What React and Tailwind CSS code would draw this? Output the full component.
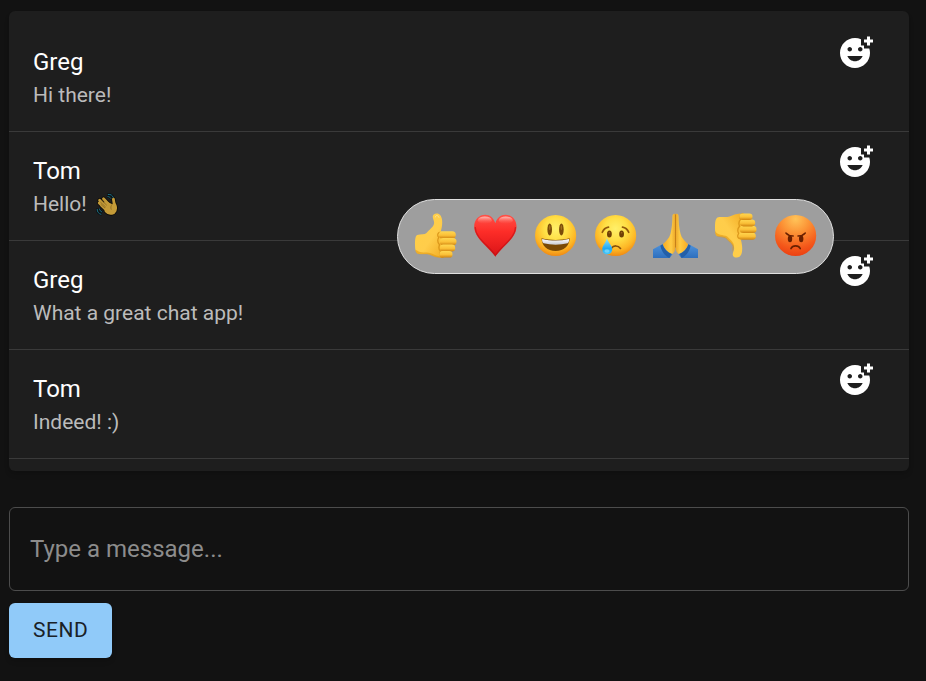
import { MdAddReaction } from "react-icons/md";

const handFingers = "M3.600 7.300l8 8M5.300 12.300l6 5.600M7.500 5.800l6.500 7M3.200 9.900l7 6.500M17.400 6.200c.2 3 1 5.500 1.800 8";
const handPalm = "M9.500 9.500l6.300 3 3.200-.5c1.800 4.500-.2 7.600-3.200 8.300-2.500.6-4.300-.6-5.800-2.300z";
const motionLines = "M12.200 1.400c2.600-.1 4.300.8 5 3M11.900 3.600c1.300.1 2.200.6 2.900 1.700M1.200 16.300c0 2.600 1.300 4.500 3.800 5M3.500 16c.2 1.500 1 2.400 2.300 2.900";

function WavingHand() {
  return (
    <svg viewBox="0 0 24 24" className="ml-1 inline-block size-6 align-middle" role="img" aria-label="Waving hand">
      <g strokeLinecap="round" strokeLinejoin="round">
        <path d={handFingers} fill="none" stroke="#0c0b08" strokeWidth="4.400" />
        <path d={handPalm} fill="#0c0b08" stroke="#0c0b08" strokeWidth="4.400" />
        <path d={motionLines} fill="none" stroke="#0a0d0e" strokeWidth="2.200" />
        <path d={motionLines} fill="none" stroke="#1e7387" strokeWidth="1" />
        <path d={handFingers} fill="none" stroke="#c49b38" strokeWidth="2.800" />
        <path d={handPalm} fill="#c49b38" stroke="#c49b38" strokeWidth="2.800" />
        <path d="M5.800 7.400l4.700 4.600M4.600 9.300l4.800 4.500M5 11.500l3.800 3.400M16 11.500c-1.300 1.600-1.500 3.200-.8 4.800" fill="none" stroke="#80601c" strokeWidth=".7" />
      </g>
    </svg>
  );
}

function ThumbShape() {
  return (
    <>
      <path
        d="M23.700.4c-2.900 0-4.300 1.700-3.900 3.900.4 2.300 1.700 4 1.200 6.500-.7 3.600-4.600 5.600-7.500 9.200-1.800 1.700-5.600 1.200-9.300 1.900C2.200 22.600 1.900 28 2 32.500c.1 3.600.6 7 2.400 8 3.600 1.200 8-.2 12.200 1 3.800 1.500 6.400 2.700 10.400 3l6-3V20l-5.200-1.500c1-3.500 1.800-7.800 1.200-11.900C28.500 2.800 26.700.4 23.700.4z"
        fill="url(#thumbFill)"
      />
      <path d="M29 20c-3.500-1.500-5.500 1.200-3.300 4.500-1.500 2.700-.8 5.500.8 7.300-1 2.600-.6 5 1 6.400-1.200 2.800-.3 5.800 3 6.400" fill="none" stroke="#dc981b" strokeWidth="1.300" />
    </>
  );
}

function Thumb() {
  return (
    <>
      <ThumbShape />
      <path d="M4 37.500c4 3 9 1.500 13 2.500 4 1.200 6 3 10 3.200l3 1.300c-6 .9-9.800-1.300-13.400-2.800-4.200-1.200-8.600.2-12.200-1-1.400-.8-1.800-2-2.100-4z" fill="#e39a14" opacity=".6" />
      <rect x="25.800" y="18.200" width="17" height="7.400" rx="3.500" fill="url(#fingerFill)" />
      <rect x="26.800" y="25" width="16.700" height="7.200" rx="3.500" fill="url(#fingerFill)" />
      <rect x="27" y="31.600" width="15.200" height="6.900" rx="3.300" fill="url(#fingerFill)" />
      <rect x="26.500" y="38" width="13" height="6.600" rx="3.200" fill="url(#fingerFill)" />
      <path d="M22.300 4c0-2 2.800-2.200 3.600.3" fill="none" stroke="#ffe48a" strokeWidth="1" strokeLinecap="round" />
    </>
  );
}

function ThumbsDown() {
  return (
    <>
      <g transform="matrix(1 0 0 -1 0 45)">
        <ThumbShape />
      </g>
      <path d="M2.100 18c2.300 4.500 8 3.700 11.800 5.300 3.500 3.600 6.500 5.500 7.100 9.500.3 2.500-1 4.400-1.200 6.700-.2-2-.8-3.500-.2-5.800-.7-3.800-4.600-5.400-7.200-8.400-2.400-1.300-5.600-.9-8.200-1.900-1.700-.7-2.100-3-2.100-5.400z" fill="#e39a14" opacity=".6" />
      <rect x="25.800" y="19.400" width="17" height="7.400" rx="3.500" fill="url(#fingerFill)" />
      <rect x="26.800" y="12.800" width="16.700" height="7.200" rx="3.500" fill="url(#fingerFill)" />
      <rect x="27" y="6.500" width="15.200" height="6.900" rx="3.300" fill="url(#fingerFill)" />
      <rect x="26.500" y=".4" width="13" height="6.600" rx="3.200" fill="url(#fingerFill)" />
    </>
  );
}

function Heart() {
  return (
    <>
      <path
        d="M22.300 10.300C20.700 4.900 17 1.800 12.300 1.800 6 1.800 1.200 6.700 1.200 13.500c0 11.800 13.800 19.500 21.100 30.200 7.300-10.700 21.200-18.400 21.200-30.200 0-6.800-4.800-11.700-11.100-11.700-4.700 0-8.500 3.100-10.100 8.500z"
        fill="url(#heartFill)"
      />
      <path d="M2.200 14c0 11 13.500 18.500 20.100 28.300C29 32.500 42.500 25 42.500 14" fill="none" stroke="#b80f12" strokeWidth="1.300" opacity=".55" />
      <ellipse cx="11.800" cy="7.200" rx="7" ry="3.700" fill="url(#heartShine)" />
      <ellipse cx="32.800" cy="7.200" rx="7" ry="3.700" fill="url(#heartShine)" />
    </>
  );
}

function Smile() {
  return (
    <>
      <circle cx="22.600" cy="22.500" r="20.600" fill="url(#faceFill)" />
      <ellipse cx="16.700" cy="16.400" rx="2.300" ry="6" fill="#7b4b08" />
      <ellipse cx="28.400" cy="16.400" rx="2.300" ry="6" fill="#7b4b08" />
      <ellipse cx="16.700" cy="14.500" rx=".8" ry="2.600" fill="#a1701c" />
      <ellipse cx="28.400" cy="14.500" rx=".8" ry="2.600" fill="#a1701c" />
      <path d="M8.500 25.300c9.300 2.300 18.900 2.300 28.200 0C36.300 33 31 38 22.600 38 14.200 38 8.900 33 8.500 25.300z" fill="#7a4905" />
      <path d="M9.200 26c9 2.100 17.800 2.100 26.800 0 .3 1.700-.1 3.400-1.400 4.300-7.600 1.800-16.400 1.800-24 0C9.300 29.400 8.900 27.700 9.200 26z" fill="url(#teethFill)" />
    </>
  );
}

function Crying() {
  return (
    <>
      <circle cx="22.600" cy="22.500" r="20.600" fill="url(#faceFill)" />
      <path d="M9.300 19.300c1.100-2.800 3.200-4.700 6.200-5.200M29.500 14.100c3 .5 5.100 2.400 6.200 5.200" fill="none" stroke="#935a0b" strokeWidth="1.700" strokeLinecap="round" />
      <ellipse cx="16.400" cy="21" rx="2.400" ry="3.600" fill="#704006" />
      <ellipse cx="28.600" cy="21" rx="2.400" ry="3.600" fill="#704006" />
      <circle cx="16.400" cy="19.800" r=".8" fill="#a36a20" />
      <circle cx="28.600" cy="19.800" r=".8" fill="#a36a20" />
      <path d="M18.300 35.200c2.300-3 6.700-3 9.200.2" fill="none" stroke="#85500b" strokeWidth="1.700" strokeLinecap="round" />
      <path d="M13.900 25.200c1.300 4.300 5.300 7.300 5.300 11 0 3-2.100 5-5 5s-5-2-5-5c0-3.700 3.900-6.700 4.700-11z" fill="url(#tearFill)" />
      <ellipse cx="14" cy="38" rx="2.600" ry="1.800" fill="#a5edff" opacity=".5" />
    </>
  );
}

function PrayHalf() {
  return (
    <>
      <path d="M0 36.200l10-5.400L19.500 41l-2.800 4H0z" fill="url(#sleeveFill)" />
      <path d="M9.600 31.200c1.400 4 4.200 7.500 8.500 9.500L16.300 45c-4.800-2.400-7.700-6.500-9-12.200z" fill="#235fa8" />
      <path d="M22.500 1c-2.100-.6-3.100.5-3.100 2.700-.1 6-.4 11.200-2 17.200-1 4-4.400 7.300-7.600 10.300 1.500 4.700 4.800 8.200 9.500 9.800 2-1.600 3.200-3.600 3.200-6.500z" fill="url(#prayFill)" />
    </>
  );
}

function Praying() {
  return (
    <>
      <PrayHalf />
      <g transform="matrix(-1 0 0 1 45 0)">
        <PrayHalf />
      </g>
      <path d="M22.500 1.500v33" stroke="#c47c14" strokeWidth=".9" />
    </>
  );
}

function Angry() {
  return (
    <>
      <circle cx="22.600" cy="22.500" r="20.600" fill="url(#angryFill)" />
      <path d="M12.900 20c1.900 2.100 4.300 3 7.300 3.100M32.300 20c-1.900 2.100-4.300 3-7.300 3.100" fill="none" stroke="#692000" strokeWidth="1.500" strokeLinecap="round" />
      <ellipse cx="17" cy="25.700" rx="2.200" ry="3.500" fill="#692000" />
      <ellipse cx="28.200" cy="25.700" rx="2.200" ry="3.500" fill="#692000" />
      <path d="M18 35.500c1.700-3.500 7.500-3.500 9.200 0" fill="none" stroke="#692000" strokeWidth="1.700" strokeLinecap="round" />
    </>
  );
}

function EmojiGradients() {
  return (
    <svg className="absolute size-0" aria-hidden="true">
      <defs>
        <linearGradient id="thumbFill" x1="0" y1="0" x2="1" y2="1">
          <stop offset="0" stopColor="#ffcf45" />
          <stop offset=".55" stopColor="#ffcd4b" />
          <stop offset="1" stopColor="#f0a81f" />
        </linearGradient>
        <linearGradient id="fingerFill" x1="0" y1="0" x2="0" y2="1">
          <stop offset="0" stopColor="#ffd751" />
          <stop offset=".55" stopColor="#fbc038" />
          <stop offset="1" stopColor="#cf830f" />
        </linearGradient>
        <linearGradient id="heartFill" x1="0" y1="0" x2="0" y2="1">
          <stop offset="0" stopColor="#ff5148" />
          <stop offset=".4" stopColor="#fd2d28" />
          <stop offset="1" stopColor="#d91317" />
        </linearGradient>
        <linearGradient id="heartShine" x1="0" y1="0" x2="0" y2="1">
          <stop offset="0" stopColor="#ffd0c9" stopOpacity=".85" />
          <stop offset="1" stopColor="#ff665c" stopOpacity="0" />
        </linearGradient>
        <radialGradient id="faceFill" cx=".5" cy=".34" r=".68">
          <stop offset="0" stopColor="#fff06a" />
          <stop offset=".4" stopColor="#ffdf45" />
          <stop offset=".75" stopColor="#fdb625" />
          <stop offset="1" stopColor="#ee8410" />
        </radialGradient>
        <linearGradient id="teethFill" x1="0" y1="0" x2="0" y2="1">
          <stop offset="0" stopColor="#ffffff" />
          <stop offset="1" stopColor="#c8c9d0" />
        </linearGradient>
        <linearGradient id="tearFill" x1="0" y1="0" x2="0" y2="1">
          <stop offset="0" stopColor="#8ee3ff" />
          <stop offset=".65" stopColor="#20a8f4" />
          <stop offset="1" stopColor="#45c9fa" />
        </linearGradient>
        <linearGradient id="prayFill" x1="0" y1="0" x2="1" y2="0">
          <stop offset="0" stopColor="#f5aa22" />
          <stop offset=".65" stopColor="#ffcc45" />
          <stop offset="1" stopColor="#eba628" />
        </linearGradient>
        <linearGradient id="sleeveFill" x1="0" y1="0" x2="0" y2="1">
          <stop offset="0" stopColor="#4f93dc" />
          <stop offset="1" stopColor="#2d6fbe" />
        </linearGradient>
        <radialGradient id="angryFill" cx=".5" cy=".1" r=".95">
          <stop offset="0" stopColor="#ffc459" />
          <stop offset=".35" stopColor="#fc9436" />
          <stop offset=".75" stopColor="#f4571a" />
          <stop offset="1" stopColor="#e93a10" />
        </radialGradient>
      </defs>
    </svg>
  );
}

const reactions = [
  { label: "Thumbs up", Drawing: Thumb },
  { label: "Heart", Drawing: Heart },
  { label: "Smile", Drawing: Smile },
  { label: "Crying", Drawing: Crying },
  { label: "Folded hands", Drawing: Praying },
  { label: "Thumbs down", Drawing: ThumbsDown },
  { label: "Angry", Drawing: Angry },
];

function ReactionPicker() {
  return (
    <div
      role="group"
      aria-label="Reactions"
      className="absolute top-[67px] right-[75px] z-10 flex gap-[15px] rounded-full border border-[#e0e0e0] bg-[#9e9e9e] px-[15px] pt-[13px] pb-[15px]"
    >
      <EmojiGradients />
      {reactions.map(({ label, Drawing }) => (
        <button key={label} type="button" aria-label={label} className="size-[45px]">
          <svg viewBox="0 0 45 45" className="block size-full" aria-hidden="true">
            <Drawing />
          </svg>
        </button>
      ))}
    </div>
  );
}

const messages = [
  { id: 1, author: "Greg", text: "Hi there!" },
  { id: 2, author: "Tom", text: "Hello! ", wave: true, picking: true },
  { id: 3, author: "Greg", text: "What a great chat app!" },
  { id: 4, author: "Tom", text: "Indeed! :)" },
];

function Message({ author, text, wave, picking }) {
  return (
    <li className="relative flex items-start justify-between border-b border-[#3a3a3a] py-3 pr-9 pl-6">
      <div className="py-[9px]">
        <h2 className="text-2xl leading-9 text-white">{author}</h2>
        <p className="h-[30px] text-[21px] leading-[30px] text-[#bbbbbb]">
          {text}
          {wave && <WavingHand />}
        </p>
      </div>
      <button type="button" aria-label="Add reaction" className="text-white">
        <MdAddReaction className="block size-9" />
      </button>
      {picking && <ReactionPicker />}
    </li>
  );
}

export default function App() {
  return (
    <main className="min-h-screen bg-[#121212] pt-[11px] pr-[17px] pb-5 pl-[9px] font-['Roboto',sans-serif]">
      <ul className="rounded-md bg-[#1e1e1e] py-3 shadow-md">
        {messages.map((message) => (
          <Message key={message.id} {...message} />
        ))}
      </ul>
      <form className="mt-9 flex flex-col items-start gap-3" onSubmit={(event) => event.preventDefault()}>
        <input
          type="text"
          aria-label="Message"
          placeholder="Type a message..."
          className="h-[84px] w-full rounded-md border border-[#4c4c4c] bg-transparent px-5 text-2xl text-white outline-none placeholder:text-[#8c8c8c]"
        />
        <button type="submit" className="rounded-md bg-[#90caf9] px-6 py-3 text-[21px] leading-[31px] tracking-wide text-[#1a2127] uppercase shadow-md">
          Send
        </button>
      </form>
    </main>
  );
}
